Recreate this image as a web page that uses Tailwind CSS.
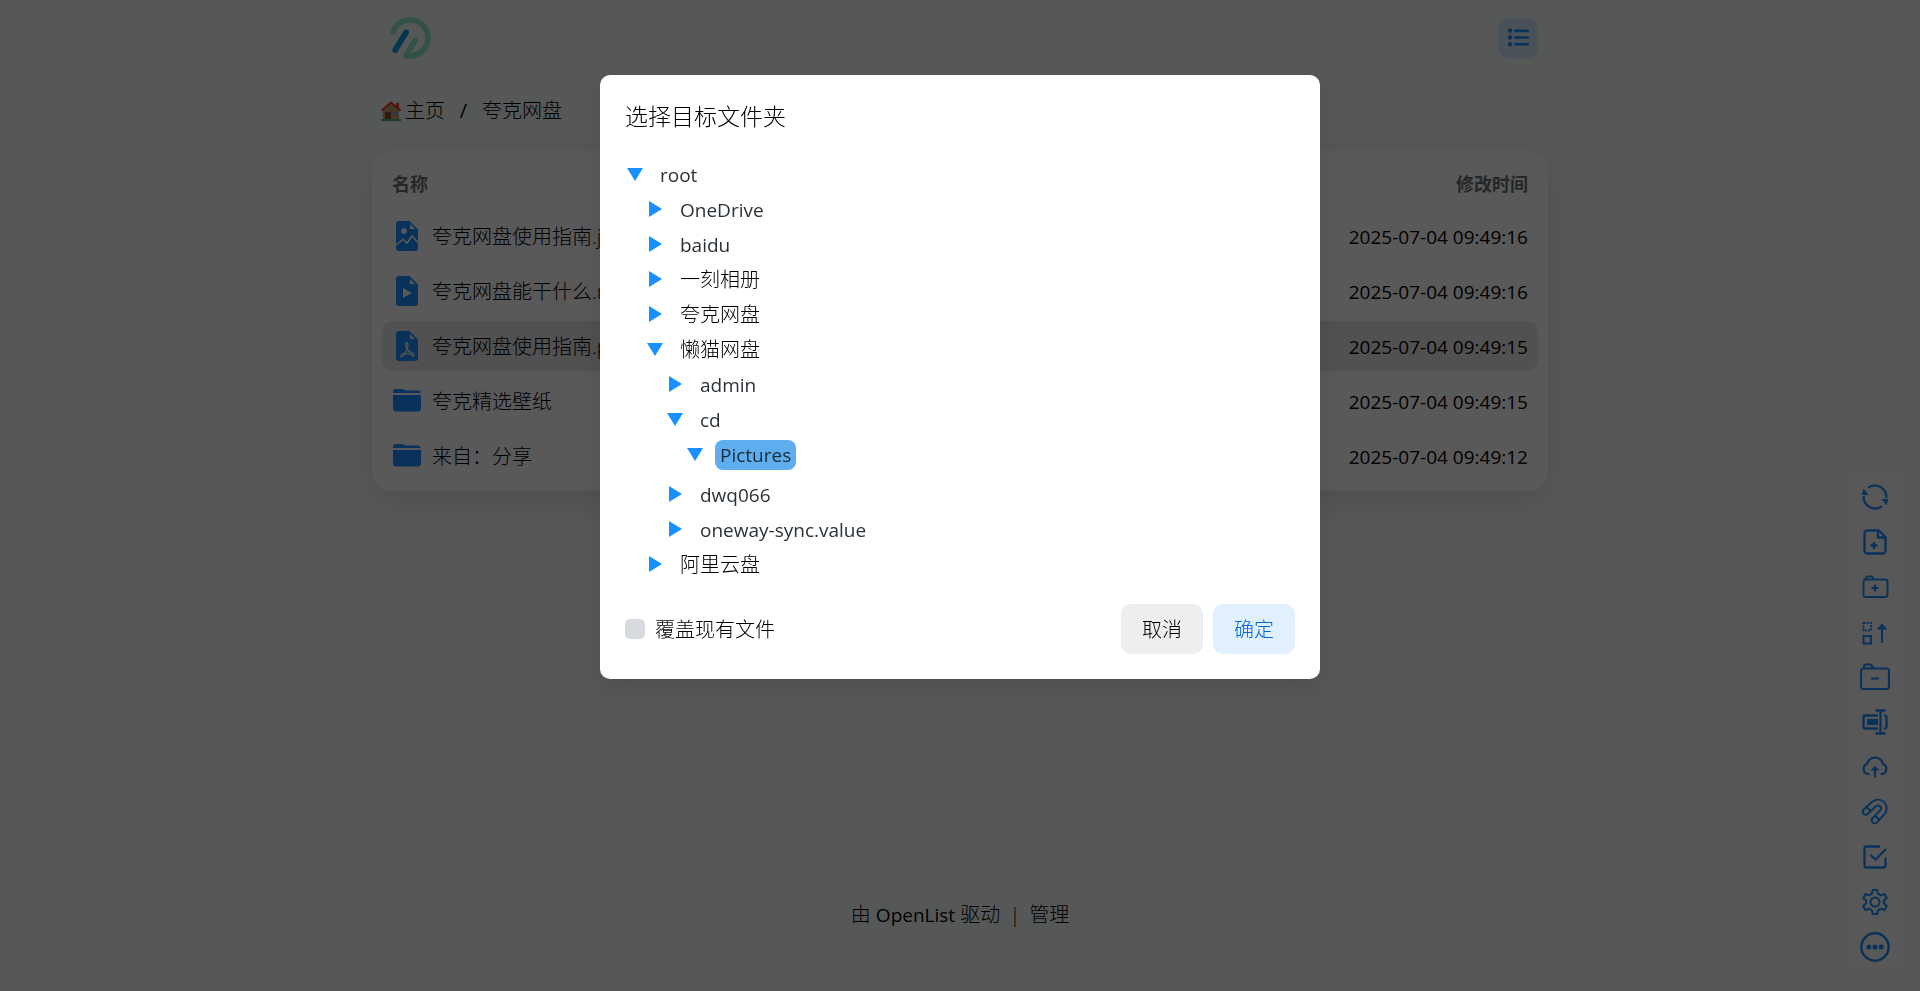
<!DOCTYPE html>
<html lang="zh-CN">
<head>
<meta charset="utf-8">
<meta name="viewport" content="width=device-width, initial-scale=1">
<title>夸克网盘</title>
<script src="https://cdn.jsdelivr.net/npm/@tailwindcss/browser@4"></script>
</head>
<body class="min-h-screen bg-[#f7fbf9] font-['Open_Sans','Noto_Sans_CJK_SC',sans-serif] text-xl leading-[30px] text-[#11181c]">
<svg class="hidden" aria-hidden="true">
  <symbol id="down" viewBox="0 0 20 20"><path fill="#1890ff" d="M2 3h16l-8 13z"/></symbol>
  <symbol id="right" viewBox="0 0 20 20"><path fill="#1890ff" d="M4 1v16l13-8z"/></symbol>
  <symbol id="folder" viewBox="0 0 30 30"><path fill="#1890ff" d="M1 7V6a3 3 0 0 1 3-3h5.500c2 0 3 1.500 5 1.500H26a3 3 0 0 1 3 2.500zM1 9h28V22.500a3 3 0 0 1-3 3H4a3 3 0 0 1-3-3z"/></symbol>
</svg>

<div class="flex min-h-screen flex-col">
  <header class="mx-auto flex h-[76px] w-full max-w-[1200px] items-center justify-between px-[22px]">
    <a href="#" aria-label="OpenList" class="ml-[3px] block">
      <svg class="size-[48px]" viewBox="0 0 48 50" fill="none" stroke-linecap="round" stroke-linejoin="round" stroke-width="6">
        <path stroke="#90e8d0" d="M7.500 18.500A18.700 18.700 0 1 1 25 43.500H20.500L30.500 27.500"/>
        <path stroke="#0c9fe0" d="M9.700 37.500L21 19"/>
      </svg>
    </a>
    <button aria-label="布局" class="grid size-10 place-items-center rounded-[10px] bg-[#d8e7fb]">
      <svg class="size-[24px]" viewBox="0 0 24 25" fill="none" stroke="#1890ff" stroke-linecap="round">
        <path stroke-width="2.800" d="M9.200 5h13M9.200 12h13M9.200 19h13"/>
        <path stroke-width="4.600" d="M3.700 5h.01M3.700 12h.01M3.700 19h.01"/>
      </svg>
    </button>
  </header>

  <main class="mx-auto flex w-full max-w-[1176px] flex-col">
    <nav aria-label="路径" class="mt-5 flex items-center px-2 font-light text-black">
      <a href="#" class="flex items-center gap-[3px]">
        <svg class="size-[22px]" viewBox="0 0 22 22"><path fill="#c6a06c" d="M3 9.500L11 3l8 6.500V20H3z"/><path fill="#8a4a38" d="M5 12h6v8H5z"/><path fill="#6fa8d8" d="M13 11.500h4v4h-4z"/><path fill="#d64545" d="M16 3h3v5h-3z"/><path d="M1.500 10.500L11 2.500l9.500 8" fill="none" stroke="#e03a3a" stroke-width="2"/><path fill="#3fb37a" d="M1 19h20v2H1z"/></svg>
        主页</a>
      <span class="w-[37px] text-center font-normal">/</span>
      <a href="#">夸克网盘</a>
    </nav>

    <section class="mt-6 rounded-[20px] bg-white px-[10px] py-[5px] shadow-[0_10px_30px_rgba(0,0,0,0.1)]">
      <table class="w-full border-separate border-spacing-x-0 border-spacing-y-[5px] font-light text-black">
        <thead>
          <tr class="h-[46px] text-lg text-[#687076]"><th class="pt-[2px] pl-[10px] text-left font-bold">名称</th><th class="pt-[2px] pr-[10px] text-right font-bold">修改时间</th></tr>
        </thead>
        <tbody>
          <tr class="h-[50px]">
            <td class="rounded-l-[10px] pl-[10px]"><a href="#" class="flex items-center gap-[10px]">
              <svg class="size-[30px]" viewBox="0 0 30 30"><path fill="#1890ff" d="M7 0H17.500l8.500 8.500V27a3 3 0 0 1-3 3H7a3 3 0 0 1-3-3V3a3 3 0 0 1 3-3z"/><path fill="#fff" d="M18 3v5h5zM9.200 10a2.800 2.800 0 1 0 5.600 0 2.800 2.800 0 1 0-5.600 0z"/><path fill="none" stroke="#fff" stroke-width="1.600" d="M3.500 24.500l7.500-6 4 3.500 5-7 6.500 7"/></svg>
              <span class="pt-[2px]">夸克网盘使用指南.jpg</span></a></td>
            <td class="rounded-r-[10px] pt-[2px] pr-[10px] text-right text-[19px] font-normal">2025-07-04 09:49:16</td>
          </tr>
          <tr class="h-[50px]">
            <td class="rounded-l-[10px] pl-[10px]"><a href="#" class="flex items-center gap-[10px]">
              <svg class="size-[30px]" viewBox="0 0 30 30"><path fill="#1890ff" d="M7 0H17.500l8.500 8.500V27a3 3 0 0 1-3 3H7a3 3 0 0 1-3-3V3a3 3 0 0 1 3-3z"/><path fill="#fff" d="M18 3v5h5zM11 12l9 5-9 5z"/></svg>
              <span class="pt-[2px]">夸克网盘能干什么.mp4</span></a></td>
            <td class="rounded-r-[10px] pt-[2px] pr-[10px] text-right text-[19px] font-normal">2025-07-04 09:49:16</td>
          </tr>
          <tr class="h-[50px]">
            <td class="rounded-l-[10px] bg-[#e8e8e8] pl-[10px]"><a href="#" class="flex items-center gap-[10px]">
              <svg class="size-[30px]" viewBox="0 0 30 30"><path fill="#1890ff" d="M7 0H17.500l8.500 8.500V27a3 3 0 0 1-3 3H7a3 3 0 0 1-3-3V3a3 3 0 0 1 3-3z"/><path fill="#e8e8e8" d="M18 3v5h5z"/><path fill="none" stroke="#e8e8e8" stroke-width="1.500" stroke-linejoin="round" d="M15 18c-2-4-1.500-6.500-.2-6.500s1.500 3 .2 6.500c2 3 4 3.800 5.700 4.300 2 .8 1.700 2.700.2 2.400-1.500-.2-2.400-1.300-3.400-2.200-2-.1-3.500.2-5.200.8-1 1.500-2 2.700-3.200 2.300-1.200-.8.700-2.400 3.200-3.200 1.200-1.400 2-2.900 2.900-4.400z"/></svg>
              <span class="pt-[2px]">夸克网盘使用指南.pdf</span></a></td>
            <td class="rounded-r-[10px] bg-[#e8e8e8] pt-[2px] pr-[10px] text-right text-[19px] font-normal">2025-07-04 09:49:15</td>
          </tr>
          <tr class="h-[50px]">
            <td class="rounded-l-[10px] pl-[10px]"><a href="#" class="flex items-center gap-[10px]"><svg class="size-[30px]"><use href="#folder"/></svg><span class="pt-[2px]">夸克精选壁纸</span></a></td>
            <td class="rounded-r-[10px] pt-[2px] pr-[10px] text-right text-[19px] font-normal">2025-07-04 09:49:15</td>
          </tr>
          <tr class="h-[50px]">
            <td class="rounded-l-[10px] pl-[10px]"><a href="#" class="flex items-center gap-[10px]"><svg class="size-[30px]"><use href="#folder"/></svg><span class="pt-[2px]">来自：分享</span></a></td>
            <td class="rounded-r-[10px] pt-[2px] pr-[10px] text-right text-[19px] font-normal">2025-07-04 09:49:12</td>
          </tr>
        </tbody>
      </table>
    </section>
  </main>

  <footer class="mt-auto mb-[61px] flex items-center justify-center font-light text-black">
    <a href="#">由 <span class="text-[19px] font-normal">OpenList</span> 驱动</a>
    <span class="w-[29px] text-center">|</span>
    <a href="#">管理</a>
  </footer>
</div>

<!-- Floating toolbar -->
<aside class="fixed right-5 bottom-[22px] flex w-[50px] flex-col items-center rounded-[10px] bg-[#fdfdfd] text-[#1890ff] shadow-[0_0_12px_rgba(0,0,0,0.03)]">
  <button aria-label="刷新" class="grid size-[45px] place-items-center"><svg class="size-[30px]" viewBox="0 0 30 30" fill="none" stroke="currentColor" stroke-width="2.300"><path d="M8 5.800A11.500 11.500 0 0 1 26.300 16M22 24.200A11.500 11.500 0 0 1 3.700 14"/><path fill="currentColor" stroke="none" d="M21.500 17h7l-2 6.500zM1.500 13h7L3.500 6.500z"/></svg></button>
  <button aria-label="新建文件" class="grid size-[45px] place-items-center"><svg class="size-[30px]" viewBox="0 0 30 30" fill="none" stroke="currentColor" stroke-width="2.300" stroke-linejoin="round"><path d="M7.500 3.500H19l6.500 6.500V23.500a3 3 0 0 1-3 3h-15a3 3 0 0 1-3-3V6.500a3 3 0 0 1 3-3zM18 3.500v7h7.500M14 15v7M10.500 18.500h7"/></svg></button>
  <button aria-label="新建文件夹" class="grid size-[45px] place-items-center"><svg class="size-[30px]" viewBox="0 0 30 30" fill="none" stroke="currentColor" stroke-width="1.900"><path d="M5 7.500h20A2.500 2.500 0 0 1 27.500 10v12.500A2.500 2.500 0 0 1 25 25H6a2.500 2.500 0 0 1-2.500-2.500V10A2.500 2.500 0 0 1 6 7.500M6 7.500V6a1.500 1.500 0 0 1 1.500-1.500H12l2.500 3"/><path stroke-width="2.200" d="M15 12.500v7M11.500 16h7"/></svg></button>
  <button aria-label="递归移动" class="grid size-[45px] place-items-center"><svg class="size-[30px]" viewBox="0 0 30 30" fill="none" stroke="currentColor" stroke-width="2"><path stroke-dasharray="2 1.200" d="M3.500 6H11v7.500H3.500z"/><path d="M3.500 19H11v7.500H3.500zM22 26V11.500"/><path fill="currentColor" stroke="none" d="M16.500 12.500h11L22 6.500z"/></svg></button>
  <button aria-label="删除空文件夹" class="grid size-[45px] place-items-center"><svg class="size-[30px]" viewBox="0 0 30 30" fill="none" stroke="currentColor" stroke-width="2.200"><path d="M3.500 6.500h23A2.500 2.500 0 0 1 29 9v15.500a2.500 2.500 0 0 1-2.500 2.500h-23A2.500 2.500 0 0 1 1 24.500V9a2.500 2.500 0 0 1 2.500-2.500M4 6.500V4.500A2 2 0 0 1 6 2.500h4.500l3.500 4M11 16.500h8"/></svg></button>
  <button aria-label="批量重命名" class="grid size-[45px] place-items-center"><svg class="size-[30px]" viewBox="0 0 30 30" fill="none" stroke="currentColor" stroke-width="2.300"><path d="M18 8.500H5A1.500 1.500 0 0 0 3.500 10v10A1.500 1.500 0 0 0 5 21.500h13M24 8.500h1a1.500 1.500 0 0 1 1.500 1.500v10a1.500 1.500 0 0 1-1.500 1.500h-1M15.500 3.500h10M15.500 26.500h10M20.500 3.500v23"/><path fill="currentColor" stroke="none" d="M7 12h11v6H7z"/></svg></button>
  <button aria-label="上传" class="grid size-[45px] place-items-center"><svg class="size-[30px]" viewBox="0 0 30 30" fill="none" stroke="currentColor" stroke-width="2.200"><path d="M9.500 22H8A5.200 5.200 0 0 1 7 12 8.200 8.200 0 0 1 23 12a5.200 5.200 0 0 1-1 10h-1.500M15 25.500V15"/><path fill="currentColor" stroke="none" d="M10.500 18.500h9L15 13.500z"/></svg></button>
  <button aria-label="离线下载" class="grid size-[45px] place-items-center"><svg class="size-[30px]" viewBox="0 0 30 30" fill="none" stroke="currentColor" stroke-width="1.900" stroke-linejoin="round"><path d="M3.500 12.500L12 5a8.700 8.700 0 0 1 12.300 12.300L17 25.300a3 3 0 0 1-4.400-4.200L20 13.500a3 3 0 0 0-4.200-4.300L8 16.700A3 3 0 0 1 3.500 12.500zM6.500 10l4.500 4.200M15 18.800l4.400 4"/></svg></button>
  <button aria-label="选择" class="grid size-[45px] place-items-center"><svg class="size-[30px]" viewBox="0 0 30 30" fill="none" stroke="currentColor" stroke-width="2.300"><path d="M20 4.500H6.500a2 2 0 0 0-2 2v17a2 2 0 0 0 2 2h17a2 2 0 0 0 2-2v-8M10.500 13l5 4.500L26 7"/></svg></button>
  <button aria-label="设置" class="grid size-[45px] place-items-center"><svg class="size-[30px]" viewBox="0 0 30 30" fill="none" stroke="currentColor" stroke-width="2" stroke-linejoin="round"><circle cx="15" cy="15" r="4.500"/><path d="M12.700 3h4.600l.8 3.700 2.700 1.600 3.700-1.300 2.300 4-2.900 2.500v3l2.900 2.500-2.300 4-3.700-1.300-2.700 1.600-.8 3.700h-4.600l-.8-3.700-2.700-1.600L5.500 23l-2.300-4 2.900-2.500v-3L3.200 11l2.300-4 3.700 1.300 2.700-1.600z"/></svg></button>
  <button aria-label="更多" class="grid size-[45px] place-items-center"><svg class="size-[30px]" viewBox="0 0 30 30" fill="none" stroke="currentColor" stroke-width="2.400"><circle cx="15" cy="15" r="13.700"/><path stroke-width="5" stroke-linecap="round" d="M8.800 15h.01M15 15h.01M21.200 15h.01"/></svg></button>
</aside>

<!-- Folder picker dialog -->
<div class="fixed inset-0 flex items-start justify-center bg-black/65 pt-[75px]">
  <div role="dialog" aria-modal="true" aria-labelledby="dlg-title" class="w-full max-w-[720px] rounded-[10px] bg-white p-[25px] shadow-[0_10px_30px_rgba(0,0,0,0.12)]">
    <h2 id="dlg-title" class="text-[23px] leading-8 font-light text-black">选择目标文件夹</h2>
    <ul class="mt-7 flex flex-col gap-[5px] font-light">
      <li>
        <div class="flex items-center gap-[10px]"><button aria-label="收起 root"><svg class="size-5"><use href="#down"/></svg></button><span class="px-[5px] text-[19px] font-normal text-[#2b3237]">root</span></div>
        <ul class="mt-[5px] flex flex-col gap-[5px] pl-5">
          <li class="flex items-center gap-[10px]"><button aria-label="展开 OneDrive"><svg class="size-5"><use href="#right"/></svg></button><span class="px-[5px] text-[19px] font-normal text-[#2b3237]">OneDrive</span></li>
          <li class="flex items-center gap-[10px]"><button aria-label="展开 baidu"><svg class="size-5"><use href="#right"/></svg></button><span class="px-[5px] text-[19px] font-normal text-[#2b3237]">baidu</span></li>
          <li class="flex items-center gap-[10px]"><button aria-label="展开 一刻相册"><svg class="size-5"><use href="#right"/></svg></button><span class="px-[5px] text-black">一刻相册</span></li>
          <li class="flex items-center gap-[10px]"><button aria-label="展开 夸克网盘"><svg class="size-5"><use href="#right"/></svg></button><span class="px-[5px] text-black">夸克网盘</span></li>
          <li>
            <div class="flex items-center gap-[10px]"><button aria-label="收起 懒猫网盘"><svg class="size-5"><use href="#down"/></svg></button><span class="px-[5px] text-black">懒猫网盘</span></div>
            <ul class="mt-[5px] flex flex-col gap-[5px] pl-5">
              <li class="flex items-center gap-[10px]"><button aria-label="展开 admin"><svg class="size-5"><use href="#right"/></svg></button><span class="px-[5px] text-[19px] font-normal text-[#2b3237]">admin</span></li>
              <li>
                <div class="flex items-center gap-[10px]"><button aria-label="收起 cd"><svg class="size-5"><use href="#down"/></svg></button><span class="px-[5px] text-[19px] font-normal text-[#2b3237]">cd</span></div>
                <ul class="mt-[5px] pb-[5px] pl-5">
                  <li class="flex items-center gap-[10px]"><button aria-label="收起 Pictures"><svg class="size-5"><use href="#down"/></svg></button><span class="rounded-lg bg-[#5eaeef] px-[5px] text-[19px] font-normal text-[#1b2b38]">Pictures</span></li>
                </ul>
              </li>
              <li class="flex items-center gap-[10px]"><button aria-label="展开 dwq066"><svg class="size-5"><use href="#right"/></svg></button><span class="px-[5px] text-[19px] font-normal text-[#2b3237]">dwq066</span></li>
              <li class="flex items-center gap-[10px]"><button aria-label="展开 oneway-sync.value"><svg class="size-5"><use href="#right"/></svg></button><span class="px-[5px] text-[19px] font-normal text-[#2b3237]">oneway-sync.value</span></li>
            </ul>
          </li>
          <li class="flex items-center gap-[10px]"><button aria-label="展开 阿里云盘"><svg class="size-5"><use href="#right"/></svg></button><span class="px-[5px] text-black">阿里云盘</span></li>
        </ul>
      </li>
    </ul>
    <div class="mt-6 flex items-center justify-between font-light text-black">
      <label class="flex items-center gap-[10px]"><input type="checkbox" class="size-5 appearance-none rounded-[5px] bg-[#d7dbdf] checked:bg-[#1890ff]"><span class="pt-[2px]">覆盖现有文件</span></label>
      <div class="flex gap-[10px]">
        <button class="h-[50px] w-[82px] rounded-[10px] bg-[#eceef0] pt-[2px]">取消</button>
        <button class="h-[50px] w-[82px] rounded-[10px] bg-[#e1f0ff] pt-[2px] text-[#006adc]">确定</button>
      </div>
    </div>
  </div>
</div>
</body>
</html>
